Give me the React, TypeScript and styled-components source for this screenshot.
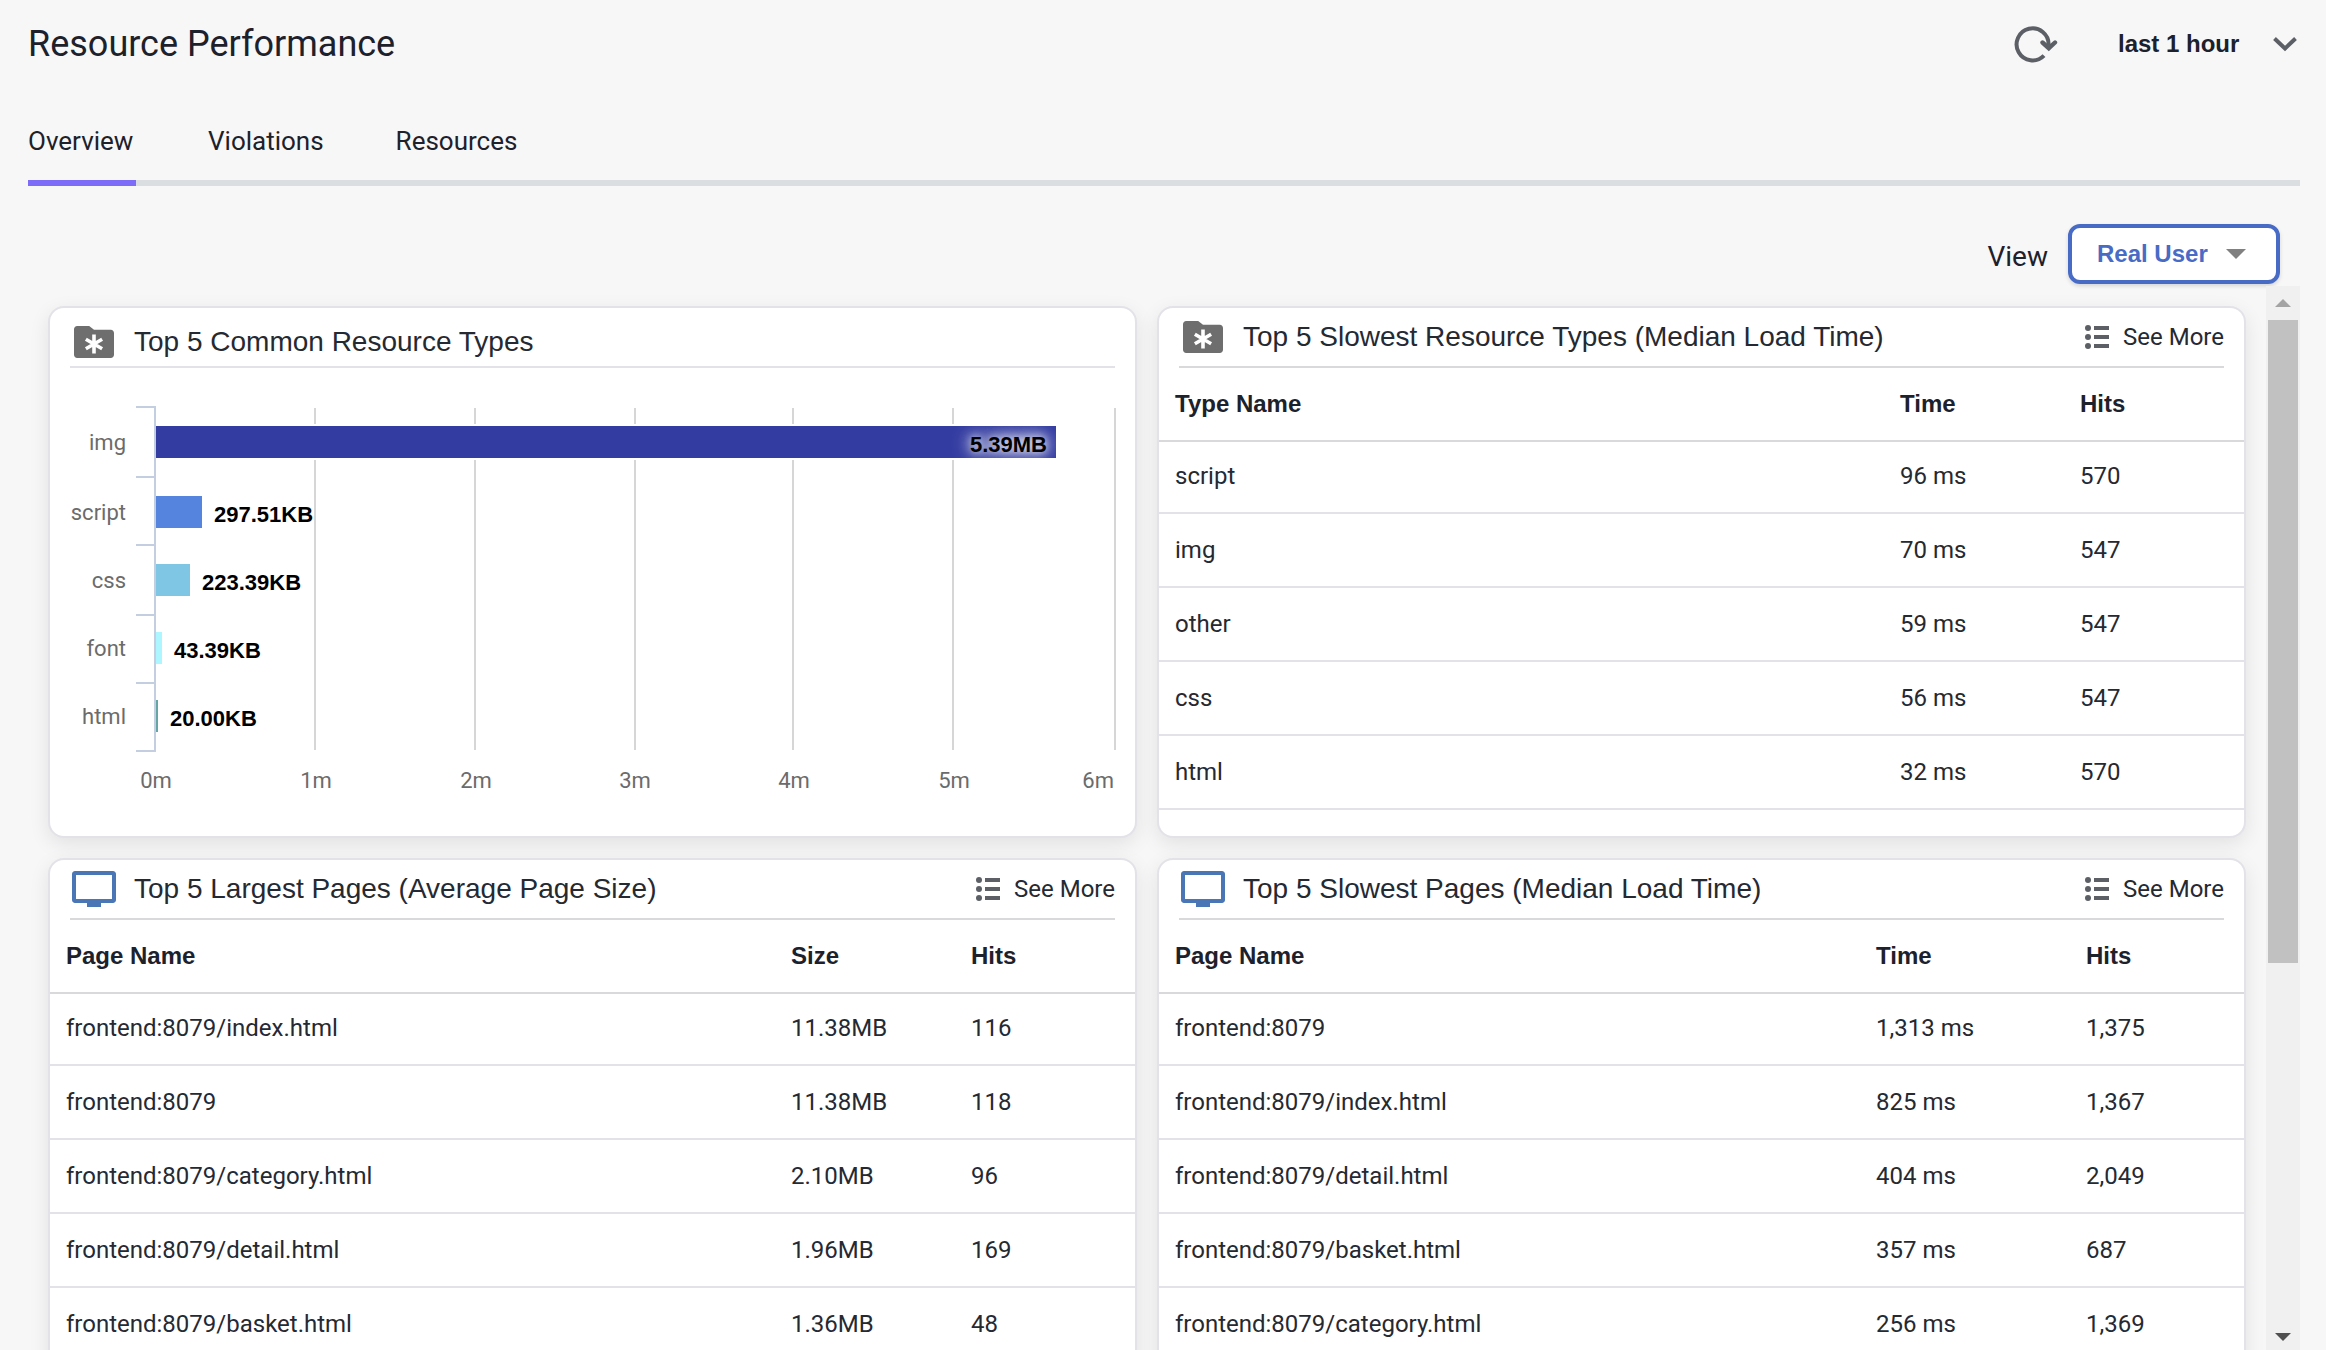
import React from "react";
import styled, { createGlobalStyle } from "styled-components";

const sans = `Roboto, "Noto Sans", sans-serif`;
const arial = `"Liberation Sans", Arial, sans-serif`;

const GlobalStyle = createGlobalStyle`
  *, *::before, *::after { box-sizing: border-box; }
  body {
    margin: 0;
    background: #f7f7f7;
    color: #1d212b;
    font-family: ${sans};
    font-size: 24px;
    overflow: hidden;
  }
`;

const Page = styled.div`
  display: flex;
  flex-direction: column;
  height: 100vh;
  padding: 0 26px 0 28px;
`;

const Header = styled.header`
  display: flex;
  align-items: center;
  justify-content: space-between;
  height: 88px;
  flex: none;
`;

const PageTitle = styled.h1`
  margin: 0;
  font-size: 36px;
  font-weight: 400;
`;

const HeaderTools = styled.div`
  display: flex;
  align-items: center;
  gap: 60px;
`;

const IconButton = styled.button`
  display: flex;
  padding: 0;
  border: 0;
  background: none;
  color: #5c6066;
  cursor: pointer;
`;

const SelectBox = styled.span<{ $outlined?: boolean }>`
  display: grid;
  align-items: center;
  justify-items: end;
  height: 60px;
  border-radius: 12px;
  color: ${(p) => (p.$outlined ? "#486bc6" : "#1d212b")};
  background: ${(p) => (p.$outlined ? "#fff" : "none")};
  border: ${(p) => (p.$outlined ? "4px solid #486bc6" : "0")};
  box-shadow: ${(p) => (p.$outlined ? "0 2px 4px rgba(0, 0, 0, 0.14)" : "none")};

  > * {
    grid-area: 1 / 1;
  }

  svg {
    pointer-events: none;
    margin-right: ${(p) => (p.$outlined ? "30px" : "2px")};
  }
`;

const Select = styled.select<{ $outlined?: boolean }>`
  appearance: none;
  margin: 0;
  height: 100%;
  border: 0;
  outline: 0;
  background: none;
  color: inherit;
  font: 700 24px ${arial};
  padding: ${(p) => (p.$outlined ? "0 68px 2px 25px" : "0 60px 2px 0")};
  cursor: pointer;
`;

const Tabs = styled.nav`
  display: flex;
  flex: none;
  gap: 72px;
  margin-top: 38px;
  box-shadow: inset 0 -6px #dadee1;
`;

const Tab = styled.a<{ $active?: boolean }>`
  min-width: 108px;
  padding-bottom: 24px;
  border-bottom: 6px solid ${(p) => (p.$active ? "#7c6cf8" : "transparent")};
  color: inherit;
  font-size: 26px;
  line-height: 30px;
  text-decoration: none;
`;

const ViewBar = styled.div`
  display: flex;
  flex: none;
  align-items: center;
  justify-content: flex-end;
  gap: 20px;
  margin-top: 38px;
  padding-right: 20px;
`;

const ViewLabel = styled.label`
  font-size: 28px;
  padding-top: 4px;
`;

const ScrollArea = styled.div`
  display: flex;
  flex: 1;
  min-height: 0;
  margin-top: 2px;
`;

const Content = styled.main`
  flex: 1;
  min-width: 0;
  overflow-y: auto;
  scrollbar-width: none;
`;

const CardGrid = styled.div`
  display: grid;
  grid-template-columns: repeat(2, minmax(0, 1fr));
  gap: 20px;
  padding: 20px;
`;

const Card = styled.section`
  min-height: 532px;
  background: #fff;
  border: 2px solid #e2e2e8;
  border-radius: 16px;
  box-shadow: 0 6px 20px rgba(0, 0, 0, 0.09);
  overflow: hidden;
`;

const CardHeader = styled.header<{ $low?: boolean }>`
  display: flex;
  align-items: center;
  height: 60px;
  margin: 0 20px;
  padding-top: ${(p) => (p.$low ? "10px" : "0")};
  border-bottom: 2px solid ${(p) => (p.$low ? "#e2e2e8" : "#d9d9db")};

  > svg {
    flex: none;
  }
`;

const CardTitle = styled.h2`
  flex: 1;
  margin: 0 0 0 16px;
  color: #252932;
  font: 400 28px ${arial};
`;

const SeeMoreLink = styled.a`
  display: flex;
  align-items: center;
  gap: 14px;
  color: #252932;
  text-decoration: none;
`;

const Table = styled.table`
  width: 100%;
  table-layout: fixed;
  border-collapse: separate;
  border-spacing: 0;
  text-align: left;
`;

const Th = styled.th<{ $width?: number }>`
  width: ${(p) => (p.$width ? `${p.$width}px` : "auto")};
  height: 74px;
  padding: 0 0 0 16px;
  border-bottom: 2px solid #d9d9db;
  font: 700 24px ${arial};
`;

const Td = styled.td`
  height: 74px;
  padding: 0 0 0 16px;
  border-bottom: 2px solid #e2e2e8;
  color: #252932;

  tr:first-child > & {
    height: 72px;
    padding-bottom: 2px;
  }
`;

const Chart = styled.svg`
  display: block;
  width: 100%;
  height: auto;
  font-size: 22px;
`;

const AxisText = styled.text`
  fill: #6b6b6b;
  font-family: ${sans};
`;

const ValueText = styled.text<{ $glow?: boolean }>`
  fill: #000;
  font-family: ${arial};
  font-weight: 700;
  text-shadow: ${(p) => (p.$glow ? "0 0 20px #fff, 0 0 14px #fff, 0 0 6px rgba(255, 255, 255, 0.5)" : "none")};
`;

const Scrollbar = styled.div`
  display: flex;
  flex-direction: column;
  flex: none;
  width: 34px;
  background: #f0f0f0;
`;

const ScrollArrow = styled.span<{ $height: number }>`
  display: flex;
  flex: none;
  align-items: center;
  justify-content: center;
  height: ${(p) => p.$height}px;
`;

const ScrollTrack = styled.div`
  flex: 1;
  padding: 0 2px;
`;

const ScrollThumb = styled.div`
  height: 64%;
  background: #c1c1c1;
`;

const RefreshIcon = () => (
  <svg width="44" height="44" viewBox="0 1 44 44" fill="none" stroke="currentColor" strokeWidth="4" aria-hidden="true">
    <path d="M30 34.6A16 16 0 1 1 34.6 24" strokeLinecap="butt" />
    <path d="M28.5 21.5L34.8 27.2L41 21.5" strokeLinecap="round" strokeWidth="4.4" />
  </svg>
);

const ChevronIcon = () => (
  <svg width="26" height="16" viewBox="0 0 26 16" fill="none" stroke="#5c6066" strokeWidth="4" aria-hidden="true">
    <path d="M2.5 2.5L13 12.5L23.5 2.5" />
  </svg>
);

const CaretIcon = ({ up, width = 20, height = 10, color = "#808080" }: { up?: boolean; width?: number; height?: number; color?: string }) => (
  <svg width={width} height={height} viewBox="0 0 20 10" preserveAspectRatio="none" fill={color} aria-hidden="true">
    <path d={up ? "M0 10L10 0L20 10z" : "M0 0L10 10L20 0z"} />
  </svg>
);

const FolderIcon = () => (
  <svg width="48" height="48" viewBox="0 0 24 24" aria-hidden="true">
    <path
      fill="#6e6e6e"
      d="M3.6 4h6l2.4 1.9h8.4c.9 0 1.6.7 1.6 1.6v10.9c0 .9-.7 1.6-1.6 1.6H3.6c-.9 0-1.6-.7-1.6-1.6V5.6C2 4.7 2.7 4 3.6 4z"
    />
    <path stroke="#fff" strokeWidth="1.8" d="M12 8.2v9.6M7.93 10.65l8.14 4.7M7.93 15.35l8.14-4.7" />
  </svg>
);

const MonitorIcon = () => (
  <svg width="48" height="48" viewBox="0 0 24 24" fill="#4a76b5" aria-hidden="true">
    <path d="M21.5 3h-19C1.700 3 1 3.700 1 4.500v13c0 .800.700 1.500 1.500 1.500h6v2h7v-2h6c.800 0 1.500-.700 1.500-1.500v-13c0-.800-.700-1.500-1.500-1.500zM21 17H3V5h18v12z" />
  </svg>
);

const ListIcon = () => (
  <svg width="24" height="24" viewBox="0 0 24 24" fill="#5c6066" aria-hidden="true">
    {[3, 12, 21].map((y) => (
      <g key={y}>
        <circle cx="3" cy={y} r="3" />
        <rect x="9" y={y - 2} width="15" height="4" />
      </g>
    ))}
  </svg>
);

const AXIS_X = 106;
const bars = [
  { name: "img", label: "5.39MB", width: 900, y: 58, color: "#333ca1" },
  { name: "script", label: "297.51KB", width: 46, y: 128, color: "#5484de" },
  { name: "css", label: "223.39KB", width: 34, y: 196, color: "#7ec6e4" },
  { name: "font", label: "43.39KB", width: 6, y: 264, color: "#adf5ff" },
  { name: "html", label: "20.00KB", width: 2, y: 332, color: "#66a5a5" },
];
const rowTicks = [39, 109, 177, 247, 315, 383];
const gridLines = [264, 424, 584, 742, 902, 1064];
const axisLabels = [106, 266, 426, 585, 744, 904];

const ResourceChart = () => (
  <Chart viewBox="0 0 1085 458" role="img" aria-label="Top 5 Common Resource Types">
    {gridLines.map((x) => (
      <rect key={x} x={x} y="40" width="2" height="342" fill="#d6d6d6" />
    ))}
    {bars.map((b) => (
      <rect key={b.name} x={AXIS_X} y={b.y - 2} width={b.width + 2} height="36" fill="#fff" />
    ))}
    {bars.map((b) => (
      <rect key={b.name} x={AXIS_X} y={b.y} width={b.width} height="32" fill={b.color} />
    ))}
    <path
      d={`M${AXIS_X - 1} 38V384 ${rowTicks.map((y) => `M${AXIS_X - 20} ${y}H${AXIS_X}`).join(" ")}`}
      stroke="#c3cfe0"
      strokeWidth="2"
    />
    {bars.map((b) => (
      <AxisText key={b.name} x="76" y={b.y + 24} textAnchor="end">
        {b.name}
      </AxisText>
    ))}
    {bars.map((b) => {
      const inside = b.width > 400;
      return (
        <ValueText
          key={b.name}
          $glow={inside}
          x={AXIS_X + b.width + (inside ? -9 : 12)}
          y={b.y + 26}
          textAnchor={inside ? "end" : "start"}
        >
          {b.label}
        </ValueText>
      );
    })}
    {axisLabels.map((x, n) => (
      <AxisText key={n} x={x} y="420" textAnchor="middle">
        {n}m
      </AxisText>
    ))}
    <AxisText x="1064" y="420" textAnchor="end">
      6m
    </AxisText>
  </Chart>
);

type TableCardProps = {
  title: string;
  icon: React.ReactNode;
  columns: { label: string; width?: number }[];
  rows: string[][];
};

const TableCard = ({ title, icon, columns, rows }: TableCardProps) => (
  <Card>
    <CardHeader>
      {icon}
      <CardTitle>{title}</CardTitle>
      <SeeMoreLink href="#">
        <ListIcon />
        See More
      </SeeMoreLink>
    </CardHeader>
    <Table>
      <thead>
        <tr>
          {columns.map((c) => (
            <Th key={c.label} scope="col" $width={c.width}>
              {c.label}
            </Th>
          ))}
        </tr>
      </thead>
      <tbody>
        {rows.map((row) => (
          <tr key={row[0]}>
            {row.map((cell, i) => (
              <Td key={i}>{cell}</Td>
            ))}
          </tr>
        ))}
      </tbody>
    </Table>
  </Card>
);

export default function App() {
  return (
    <>
      <GlobalStyle />
      <Page>
        <Header>
          <PageTitle>Resource Performance</PageTitle>
          <HeaderTools>
            <IconButton type="button" aria-label="Refresh">
              <RefreshIcon />
            </IconButton>
            <SelectBox>
              <Select aria-label="Time range">
                <option>last 1 hour</option>
              </Select>
              <ChevronIcon />
            </SelectBox>
          </HeaderTools>
        </Header>

        <Tabs>
          <Tab href="#overview" $active aria-current="page">
            Overview
          </Tab>
          <Tab href="#violations">Violations</Tab>
          <Tab href="#resources">Resources</Tab>
        </Tabs>

        <ViewBar>
          <ViewLabel htmlFor="view">View</ViewLabel>
          <SelectBox $outlined>
            <Select id="view" $outlined>
              <option>Real User</option>
            </Select>
            <CaretIcon />
          </SelectBox>
        </ViewBar>

        <ScrollArea>
          <Content>
            <CardGrid>
              <Card>
                <CardHeader $low>
                  <FolderIcon />
                  <CardTitle>Top 5 Common Resource Types</CardTitle>
                </CardHeader>
                <ResourceChart />
              </Card>
              <TableCard
                title="Top 5 Slowest Resource Types (Median Load Time)"
                icon={<FolderIcon />}
                columns={[{ label: "Type Name" }, { label: "Time", width: 180 }, { label: "Hits", width: 180 }]}
                rows={[
                  ["script", "96 ms", "570"],
                  ["img", "70 ms", "547"],
                  ["other", "59 ms", "547"],
                  ["css", "56 ms", "547"],
                  ["html", "32 ms", "570"],
                ]}
              />
              <TableCard
                title="Top 5 Largest Pages (Average Page Size)"
                icon={<MonitorIcon />}
                columns={[{ label: "Page Name" }, { label: "Size", width: 180 }, { label: "Hits", width: 180 }]}
                rows={[
                  ["frontend:8079/index.html", "11.38MB", "116"],
                  ["frontend:8079", "11.38MB", "118"],
                  ["frontend:8079/category.html", "2.10MB", "96"],
                  ["frontend:8079/detail.html", "1.96MB", "169"],
                  ["frontend:8079/basket.html", "1.36MB", "48"],
                ]}
              />
              <TableCard
                title="Top 5 Slowest Pages (Median Load Time)"
                icon={<MonitorIcon />}
                columns={[{ label: "Page Name" }, { label: "Time", width: 210 }, { label: "Hits", width: 174 }]}
                rows={[
                  ["frontend:8079", "1,313 ms", "1,375"],
                  ["frontend:8079/index.html", "825 ms", "1,367"],
                  ["frontend:8079/detail.html", "404 ms", "2,049"],
                  ["frontend:8079/basket.html", "357 ms", "687"],
                  ["frontend:8079/category.html", "256 ms", "1,369"],
                ]}
              />
            </CardGrid>
          </Content>
          <Scrollbar aria-hidden="true">
            <ScrollArrow $height={34}>
              <CaretIcon up width={16} height={8} color="#a3a3a3" />
            </ScrollArrow>
            <ScrollTrack>
              <ScrollThumb />
            </ScrollTrack>
            <ScrollArrow $height={26}>
              <CaretIcon width={16} height={8} color="#505050" />
            </ScrollArrow>
          </Scrollbar>
        </ScrollArea>
      </Page>
    </>
  );
}
